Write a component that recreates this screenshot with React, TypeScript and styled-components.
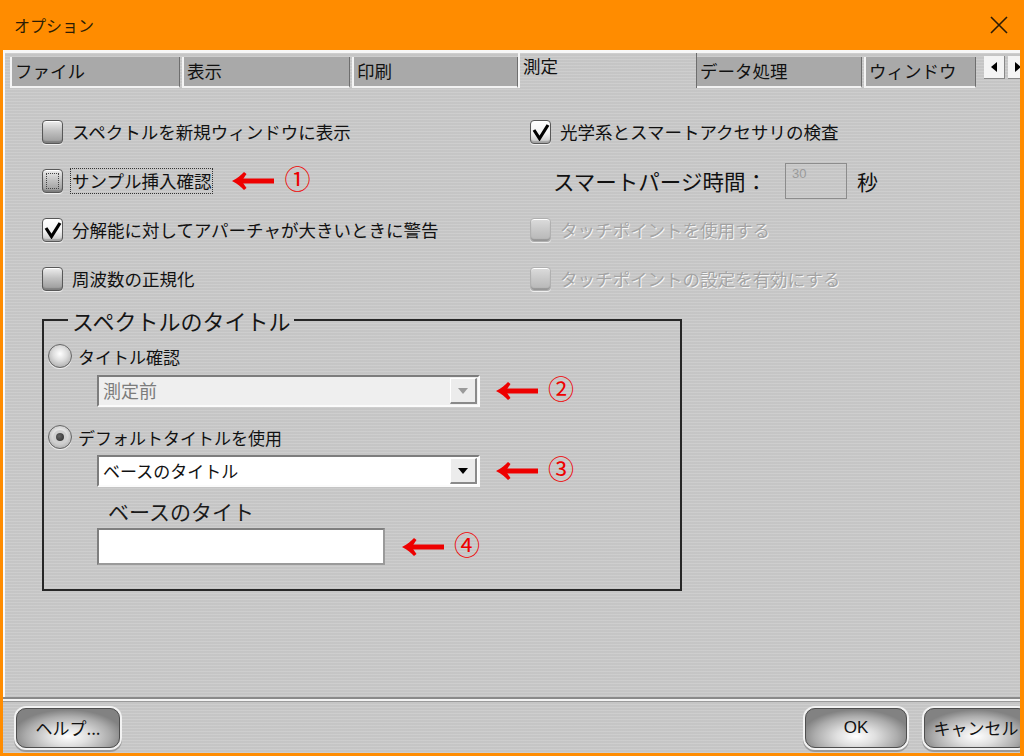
import React from "react"
import styled, { createGlobalStyle } from "styled-components"

const GlobalStyle = createGlobalStyle`
  html, body {
    margin: 0;
    padding: 0;
    overflow: hidden;
  }
  body {
    font-family: "Noto Sans CJK JP", "Noto Sans", sans-serif;
    color: #111;
  }
`

const metal = `
  repeating-linear-gradient(
    180deg,
    rgba(255, 255, 255, 0.07) 0px,
    rgba(255, 255, 255, 0.07) 1px,
    rgba(0, 0, 0, 0.025) 1px,
    rgba(0, 0, 0, 0.025) 3px
  ),
  #cacaca
`

const Window = styled.div`
  width: 1024px;
  height: 756px;
  background: #ff8c00;
  display: flex;
  flex-direction: column;
  padding: 0 4px 3px 3px;
  box-sizing: border-box;
`

const TitleBar = styled.div`
  height: 50px;
  flex: none;
  display: flex;
  align-items: center;
  justify-content: space-between;
  padding: 0 12px 0 11px;
  font-size: 16px;
  color: #2b1c05;
`

const Body = styled.div`
  flex: 1;
  display: flex;
  flex-direction: column;
  background: ${metal};
  min-height: 0;
`

const TabStrip = styled.div`
  height: 38px;
  flex: none;
  display: flex;
  align-items: flex-end;
  border-top: 3px solid #f7f7f7;
  border-left: 2px solid #fafafa;
  padding-left: 5px;
  box-sizing: border-box;
  overflow: hidden;
`

const Tab = styled.div<{ $w: number; $active?: boolean }>`
  width: ${(p) => p.$w}px;
  flex: none;
  box-sizing: border-box;
  height: ${(p) => (p.$active ? 35 : 31)}px;
  margin: ${(p) => (p.$active ? "0 -2px" : "0 2px 0 0")};
  position: ${(p) => (p.$active ? "relative" : "static")};
  background: ${(p) => (p.$active ? metal : "#a9a9a9")};
  border-left: 2px solid #f4f4f4;
  border-right: 1px solid #6e6e6e;
  border-bottom: ${(p) => (p.$active ? "none" : "2px solid #f2f2f2")};
  font-size: 17.5px;
  line-height: ${(p) => (p.$active ? 26 : 28)}px;
  padding-left: 3px;
  white-space: nowrap;
  overflow: hidden;
`

const ScrollButtons = styled.div`
  display: flex;
  gap: 3px;
  margin-left: 6px;
  align-self: flex-start;
  margin-top: 3px;
`

const ScrollButton = styled.div`
  width: 20px;
  height: 22px;
  background: #f4f4f4;
  border-right: 1px solid #888;
  border-bottom: 1px solid #888;
  display: flex;
  align-items: center;
  justify-content: center;
`

const Panel = styled.div`
  flex: 1;
  border-left: 2px solid #fafafa;
  padding: 19px 0 0 37px;
  min-height: 0;
`

const OptionGrid = styled.div`
  display: grid;
  grid-template-columns: 488px 1fr;
  grid-auto-rows: 49px;
  align-items: center;
`

const Row = styled.div<{ $indent?: number }>`
  display: flex;
  align-items: center;
  gap: 8px;
  padding-left: ${(p) => p.$indent ?? 0}px;
  font-size: 17.5px;
  white-space: nowrap;
`

const Label = styled.span<{ $disabled?: boolean; $focused?: boolean }>`
  color: ${(p) => (p.$disabled ? "#a4a4a4" : "#111")};
  text-shadow: ${(p) => (p.$disabled ? "1px 1px 0 #f6f6f6" : "none")};
  outline: ${(p) => (p.$focused ? "1px dotted #333" : "none")};
  outline-offset: 0px;
  padding: 0 1px;
  line-height: 24px;
`

const BoxShell = styled.span<{ $checked?: boolean; $disabled?: boolean; $focused?: boolean }>`
  width: 21px;
  height: 24px;
  flex: none;
  box-sizing: border-box;
  border-radius: 4px;
  border: 1px solid ${(p) => (p.$disabled ? "#b0b0b0" : "#585858")};
  background: ${(p) =>
    p.$checked
      ? "linear-gradient(180deg, #ffffff 0%, #f4f4f4 55%, #c4c4c4 100%)"
      : p.$disabled
      ? "linear-gradient(180deg, #dcdcdc 0%, #c6c6c6 55%, #b6b6b6 100%)"
      : "linear-gradient(180deg, #eeeeee 0%, #c2c2c2 45%, #999999 100%)"};
  box-shadow: inset 0 1px 0 #fff, inset 0 -2px 1px rgba(0, 0, 0, 0.18), 0 1px 0 #eee;
  outline: ${(p) => (p.$focused ? "1px dotted #444" : "none")};
  outline-offset: -5px;
  display: flex;
  align-items: center;
  justify-content: center;
`

const RadioShell = styled.span<{ $checked?: boolean }>`
  width: 24px;
  height: 24px;
  flex: none;
  box-sizing: border-box;
  border-radius: 50%;
  border: 1px solid #666;
  background: radial-gradient(circle at 50% 40%, #ffffff 0%, #dedede 40%, #9a9a9a 100%);
  box-shadow: 0 1px 0 #f0f0f0;
  display: flex;
  align-items: center;
  justify-content: center;
`

const RadioDot = styled.span`
  width: 8px;
  height: 8px;
  border-radius: 50%;
  background: radial-gradient(circle at 40% 40%, #666 0%, #2a2a2a 100%);
  box-shadow: 0 0 0 3px #cfcfcf;
`

const PurgeLabel = styled.span`
  font-size: 21.5px;
  line-height: 28px;
  color: #111;
`

const SmallField = styled.div`
  width: 62px;
  height: 36px;
  box-sizing: border-box;
  border: 1px solid #8c8c8c;
  margin-left: 10px;
  padding: 2px 0 0 6px;
  font-family: "Liberation Sans", Arial, sans-serif;
  font-size: 13px;
  color: #9a9a9a;
`

const Unit = styled.span`
  font-size: 21px;
  margin-left: 2px;
`

const GroupBox = styled.fieldset`
  width: 640px;
  box-sizing: border-box;
  margin: 4px 0 0 0;
  border: 2px solid #262626;
  padding: 9px 0 24px 4px;
  display: flex;
  flex-direction: column;
`

const Legend = styled.legend`
  margin-left: 20px;
  padding: 0 4px;
  font-size: 22px;
  line-height: 26px;
  color: #151515;
`

const RadioRow = styled.div<{ $mt?: number }>`
  display: flex;
  align-items: center;
  gap: 6px;
  height: 28px;
  margin-top: ${(p) => p.$mt ?? 0}px;
  font-size: 17px;
`

const FieldLine = styled.div<{ $mt: number }>`
  display: flex;
  align-items: center;
  margin-top: ${(p) => p.$mt}px;
  padding-left: 49px;
`

const Select = styled.div<{ $disabled?: boolean }>`
  width: 383px;
  height: 32px;
  box-sizing: border-box;
  display: flex;
  align-items: stretch;
  border-top: 2px solid #7d7d7d;
  border-left: 2px solid #7d7d7d;
  border-bottom: 2px solid #fbfbfb;
  border-right: 2px solid #fbfbfb;
  background: ${(p) => (p.$disabled ? "#efefef" : "#ffffff")};
  color: ${(p) => (p.$disabled ? "#7c7c7c" : "#111")};
  font-size: ${(p) => (p.$disabled ? 18 : 17)}px;
`

const SelectText = styled.span`
  flex: 1;
  padding-left: 4px;
  line-height: 27px;
  white-space: nowrap;
`

const SelectButton = styled.span`
  width: 27px;
  flex: none;
  box-sizing: border-box;
  margin: 1px 1px 1px 0;
  background: #ececec;
  border-top: 1px solid #fff;
  border-left: 1px solid #fff;
  border-right: 2px solid #8a8a8a;
  border-bottom: 2px solid #8a8a8a;
  display: flex;
  align-items: center;
  justify-content: center;
`

const FieldCaption = styled.div`
  margin: 11px 0 0 60px;
  font-size: 21px;
  line-height: 26px;
  color: #1a1a1a;
`

const TextField = styled.div`
  width: 288px;
  height: 37px;
  box-sizing: border-box;
  background: #fff;
  border: 2px solid #7f7f7f;
  border-right-color: #9a9a9a;
  border-bottom-color: #9a9a9a;
`

const Note = styled.span<{ $ml: number }>`
  display: inline-flex;
  align-items: center;
  gap: 10px;
  margin-left: ${(p) => p.$ml}px;
  color: #ee0000;
  font-family: "Liberation Serif", "DejaVu Serif", "Noto Sans CJK JP", serif;
  font-size: 26px;
  line-height: 28px;
`

const Separator = styled.div`
  height: 5px;
  flex: none;
  border-top: 2px solid #8a8a8a;
  border-bottom: 1px solid #9a9a9a;
  background: #f4f4f4;
  box-sizing: border-box;
`

const ButtonBar = styled.div`
  height: 51px;
  flex: none;
  display: flex;
  align-items: center;
  padding: 0 0 0 13px;
  overflow: hidden;
`

const Spacer = styled.div`
  flex: 1;
`

const Button = styled.div<{ $w: number; $mr?: number }>`
  width: ${(p) => p.$w}px;
  height: 40px;
  flex: none;
  box-sizing: border-box;
  margin-right: ${(p) => p.$mr ?? 0}px;
  border-radius: 10px;
  border: 1px solid #4e4e4e;
  box-shadow: 0 0 0 2px #f2f2f2, 0 2px 0 2px #9a9a9a;
  background: radial-gradient(
    ellipse 55% 70% at 50% 72%,
    #ffffff 0%,
    #e0e0e0 35%,
    #acacac 75%,
    #828282 100%
  );
  display: flex;
  align-items: center;
  justify-content: center;
  font-size: 17px;
  color: #111;
  white-space: nowrap;
`

const ButtonEn = styled.span`
  font-family: "Liberation Sans", Arial, sans-serif;
  font-size: 17px;
`

const CheckMark = () => (
  <svg width="18" height="18" viewBox="0 0 18 18">
    <path d="M2 7 L7.5 15.5 L16 2" fill="none" stroke="#000" strokeWidth="3.2" strokeLinejoin="miter" />
  </svg>
)

const Triangle = ({ color, dir }: { color: string; dir: "down" | "left" | "right" }) => {
  const d =
    dir === "down" ? "M0 0 L10 0 L5 6 Z" : dir === "left" ? "M6 0 L6 10 L0 5 Z" : "M0 0 L0 10 L6 5 Z"
  const w = dir === "down" ? 10 : 6
  const h = dir === "down" ? 6 : 10
  return (
    <svg width={w} height={h} viewBox={`0 0 ${w} ${h}`}>
      <path d={d} fill={color} />
    </svg>
  )
}

const RedArrow = () => (
  <svg width="42" height="20" viewBox="0 0 42 20">
    <path d="M10 10 L42 10" stroke="#ee0000" strokeWidth="5" />
    <path d="M0 10 C6 7 9 4 12 1 L14.5 3 C12.5 6 11 8 10 10 C11 12 12.5 14 14.5 17 L12 19 C9 16 6 13 0 10 Z" fill="#ee0000" />
  </svg>
)

const Checkbox = ({
  label,
  checked,
  disabled,
  focused,
}: {
  label: string
  checked?: boolean
  disabled?: boolean
  focused?: boolean
}) => (
  <>
    <BoxShell $checked={checked} $disabled={disabled} $focused={focused}>
      {checked && <CheckMark />}
    </BoxShell>
    <Label $disabled={disabled} $focused={focused}>
      {label}
    </Label>
  </>
)

export default function App() {
  return (
    <>
      <GlobalStyle />
      <Window>
        <TitleBar>
          <span>オプション</span>
          <svg width="18" height="18" viewBox="0 0 18 18">
            <path d="M1 1 L17 17 M17 1 L1 17" stroke="#2a1a05" strokeWidth="1.6" />
          </svg>
        </TitleBar>
        <Body>
          <TabStrip>
            <Tab $w={170}>ファイル</Tab>
            <Tab $w={168}>表示</Tab>
            <Tab $w={166}>印刷</Tab>
            <Tab $w={179} $active>
              測定
            </Tab>
            <Tab $w={167}>データ処理</Tab>
            <Tab $w={112}>ウィンドウ</Tab>
            <ScrollButtons>
              <ScrollButton>
                <Triangle color="#000" dir="left" />
              </ScrollButton>
              <ScrollButton>
                <Triangle color="#000" dir="right" />
              </ScrollButton>
            </ScrollButtons>
          </TabStrip>
          <Panel>
            <OptionGrid>
              <Row>
                <Checkbox label="スペクトルを新規ウィンドウに表示" />
              </Row>
              <Row>
                <Checkbox label="光学系とスマートアクセサリの検査" checked />
              </Row>
              <Row>
                <Checkbox label="サンプル挿入確認" focused />
                <Note $ml={12}>
                  <RedArrow />①
                </Note>
              </Row>
              <Row $indent={23}>
                <PurgeLabel>スマートパージ時間：</PurgeLabel>
                <SmallField>30</SmallField>
                <Unit>秒</Unit>
              </Row>
              <Row>
                <Checkbox label="分解能に対してアパーチャが大きいときに警告" checked />
              </Row>
              <Row>
                <Checkbox label="タッチポイントを使用する" disabled />
              </Row>
              <Row>
                <Checkbox label="周波数の正規化" />
              </Row>
              <Row>
                <Checkbox label="タッチポイントの設定を有効にする" disabled />
              </Row>
            </OptionGrid>
            <GroupBox>
              <Legend>スペクトルのタイトル</Legend>
              <RadioRow>
                <RadioShell />
                <span>タイトル確認</span>
              </RadioRow>
              <FieldLine $mt={5}>
                <Select $disabled>
                  <SelectText>測定前</SelectText>
                  <SelectButton>
                    <Triangle color="#9a9a9a" dir="down" />
                  </SelectButton>
                </Select>
                <Note $ml={16}>
                  <RedArrow />②
                </Note>
              </FieldLine>
              <RadioRow $mt={16}>
                <RadioShell $checked>
                  <RadioDot />
                </RadioShell>
                <span>デフォルトタイトルを使用</span>
              </RadioRow>
              <FieldLine $mt={4}>
                <Select>
                  <SelectText>ベースのタイトル</SelectText>
                  <SelectButton>
                    <Triangle color="#000" dir="down" />
                  </SelectButton>
                </Select>
                <Note $ml={16}>
                  <RedArrow />③
                </Note>
              </FieldLine>
              <FieldCaption>ベースのタイト</FieldCaption>
              <FieldLine $mt={4}>
                <TextField />
                <Note $ml={17}>
                  <RedArrow />④
                </Note>
              </FieldLine>
            </GroupBox>
          </Panel>
          <Separator />
          <ButtonBar>
            <Button $w={104}>ヘルプ...</Button>
            <Spacer />
            <Button $w={102} $mr={17}>
              <ButtonEn>OK</ButtonEn>
            </Button>
            <Button $w={104} $mr={-8}>
              キャンセル
            </Button>
          </ButtonBar>
        </Body>
      </Window>
    </>
  )
}
